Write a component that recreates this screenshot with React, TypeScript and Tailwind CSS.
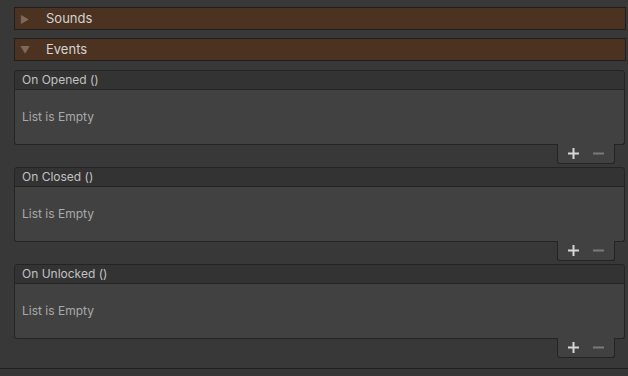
import React from 'react';

const font = { fontFamily: 'Inter, "Noto Sans", sans-serif' };

const Foldout = ({ label, open }: { label: string; open?: boolean }) => (
  <div className="flex items-center h-[23px] w-[612px] border border-[#1f1f1f] bg-[#4b3221]">
    <span className="w-[31px] pl-[5px] text-[10px] leading-none text-[#7d6a5b]">{open ? '▼' : '▶'}</span>
    <span className="text-[13px] text-[#d4d4d4]">{label}</span>
  </div>
);

const EventBox = ({ name }: { name: string }) => (
  <div className="w-[611px]">
    <div className="h-[20px] flex items-center px-[7px] bg-[#333333] border border-[#242424] rounded-t-[3px] text-[12px] text-[#c2c2c2]">
      {name}
    </div>
    <div className="h-[55px] flex items-center px-[7px] bg-[#414141] border-x border-b border-[#242424] rounded-b-[3px] text-[12px] text-[#a9a9a9]">
      List is Empty
    </div>
    <div className="flex justify-end pr-[10px] -mt-px">
      <div className="h-[20px] w-[58px] flex items-center gap-[14px] pl-[10px] bg-[#414141] border-x border-b border-[#242424] rounded-b-[3px]">
        <svg width="11" height="11" viewBox="0 0 11 11">
          <rect x="4.5" y="0" width="2" height="11" fill="#d6d6d6" />
          <rect x="0" y="4.5" width="11" height="2" fill="#d6d6d6" />
        </svg>
        <svg width="11" height="11" viewBox="0 0 11 11">
          <rect x="0" y="4.5" width="11" height="2" fill="#7a7a7a" />
        </svg>
      </div>
    </div>
  </div>
);

export default function App() {
  return (
    <div className="h-[376px] w-[628px] bg-[#383838] overflow-hidden flex flex-col" style={font}>
      <div className="pl-[14px] pt-[7px] flex flex-col">
        <Foldout label="Sounds" />
        <div className="h-[8px]" />
        <Foldout label="Events" open />
        <div className="h-[9px]" />
        <div className="flex flex-col gap-[3px]">
          <EventBox name="On Opened ()" />
          <EventBox name="On Closed ()" />
          <EventBox name="On Unlocked ()" />
        </div>
      </div>
      <div className="mt-[10px] border-t border-[#1e1e1e] flex-1 bg-[#363636]" />
    </div>
  );
}
